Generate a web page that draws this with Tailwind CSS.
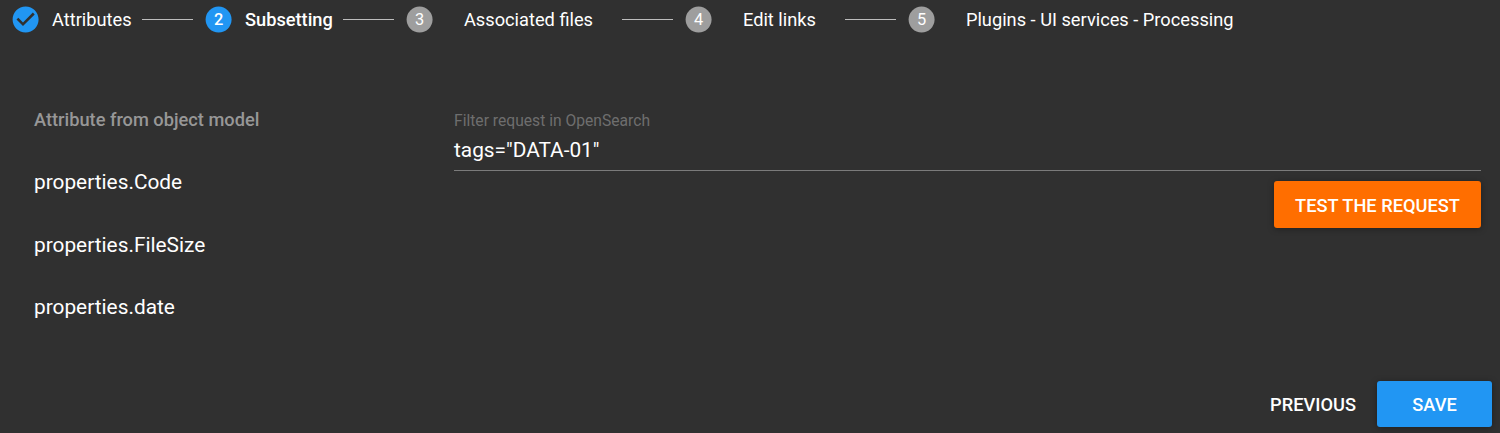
<!DOCTYPE html>
<html lang="en">
<head>
<meta charset="utf-8">
<title>Subsetting</title>
<script src="https://cdn.jsdelivr.net/npm/@tailwindcss/browser@4"></script>
</head>
<body class="h-[433px] overflow-hidden bg-[#303030] font-['Roboto',sans-serif] text-white flex flex-col">
<nav class="flex h-[39px] items-center pl-[10px] text-[18.24px] leading-[25px] whitespace-nowrap">
  <svg class="size-[31.2px] shrink-0" viewBox="0 0 24 24"><path fill="#2196f3" d="M12 2C6.48 2 2 6.48 2 12s4.480 10 10 10 10-4.480 10-10S17.520 2 12 2zm-2 15l-5-5 1.410-1.410L10 14.170l7.590-7.590L19 8l-9 9z"/></svg>
  <span class="ml-[10.8px] w-[80px]">Attributes</span>
  <span class="ml-[10px] h-px w-[51px] bg-[#bdbdbd]"></span>
  <svg class="ml-[10px] size-[31.2px] shrink-0" viewBox="0 0 24 24"><circle cx="12" cy="12" r="10" fill="#2196f3"/><text x="12" y="16" text-anchor="middle" font-size="12.6" font-weight="500" fill="#fff">2</text></svg>
  <span class="ml-[10.8px] w-[88px] font-medium">Subsetting</span>
  <span class="ml-[10px] h-px w-[51px] bg-[#bdbdbd]"></span>
  <svg class="ml-[10px] size-[31.2px] shrink-0" viewBox="0 0 24 24"><circle cx="12" cy="12" r="10" fill="#9e9e9e"/><text x="12" y="16" text-anchor="middle" font-size="12.6" fill="#fff">3</text></svg>
  <span class="ml-[28.8px] w-[130px]">Associated files</span>
  <span class="ml-[28px] h-px w-[51px] bg-[#bdbdbd]"></span>
  <svg class="ml-[10px] size-[31.2px] shrink-0" viewBox="0 0 24 24"><circle cx="12" cy="12" r="10" fill="#9e9e9e"/><text x="12" y="16" text-anchor="middle" font-size="12.6" fill="#fff">4</text></svg>
  <span class="ml-[28.8px] w-[73px]">Edit links</span>
  <span class="ml-[29px] h-px w-[51px] bg-[#bdbdbd]"></span>
  <svg class="ml-[10px] size-[31.2px] shrink-0" viewBox="0 0 24 24"><circle cx="12" cy="12" r="10" fill="#9e9e9e"/><text x="12" y="16" text-anchor="middle" font-size="12.6" fill="#fff">5</text></svg>
  <span class="ml-[28.8px]">Plugins - UI services - Processing</span>
</nav>
<main class="flex flex-1 pl-[34px] pr-[19px] pt-[49px]">
  <section class="w-[420px]">
    <h2 class="flex h-[63px] items-center pt-px text-[18.24px] font-medium text-[#979797]">Attribute from object model</h2>
    <ul class="text-[20.84px] leading-[30px]">
      <li class="flex h-[63px] items-center pb-[2px]">properties.Code</li>
      <li class="flex h-[62px] items-center">properties.FileSize</li>
      <li class="flex h-[62px] items-center">properties.date</li>
    </ul>
  </section>
  <section class="flex flex-1 flex-col pt-[21px]">
    <label class="text-[15.65px] leading-[24px] text-[#6e6e6e]">Filter request in OpenSearch</label>
    <div class="h-[38px] border-b border-[#7b7b7b] pt-[3px] text-[20.84px] leading-[28px]">tags="DATA-01"</div>
    <button class="mt-[10px] h-[47px] w-[207px] self-end rounded-[3px] bg-[#ff6e00] pt-[2px] text-[18.24px] font-medium shadow-[0_1px_6px_rgba(0,0,0,0.35)]">TEST THE REQUEST</button>
  </section>
</main>
<footer class="flex h-[52px] shrink-0 justify-end pr-[8px] text-[18.24px] font-medium">
  <button class="h-[47px] w-[128px]">PREVIOUS</button>
  <button class="h-[46px] w-[115px] rounded-[3px] bg-[#2196f3] pt-[2px] shadow-[0_1px_6px_rgba(0,0,0,0.35)]">SAVE</button>
</footer>
</body>
</html>
